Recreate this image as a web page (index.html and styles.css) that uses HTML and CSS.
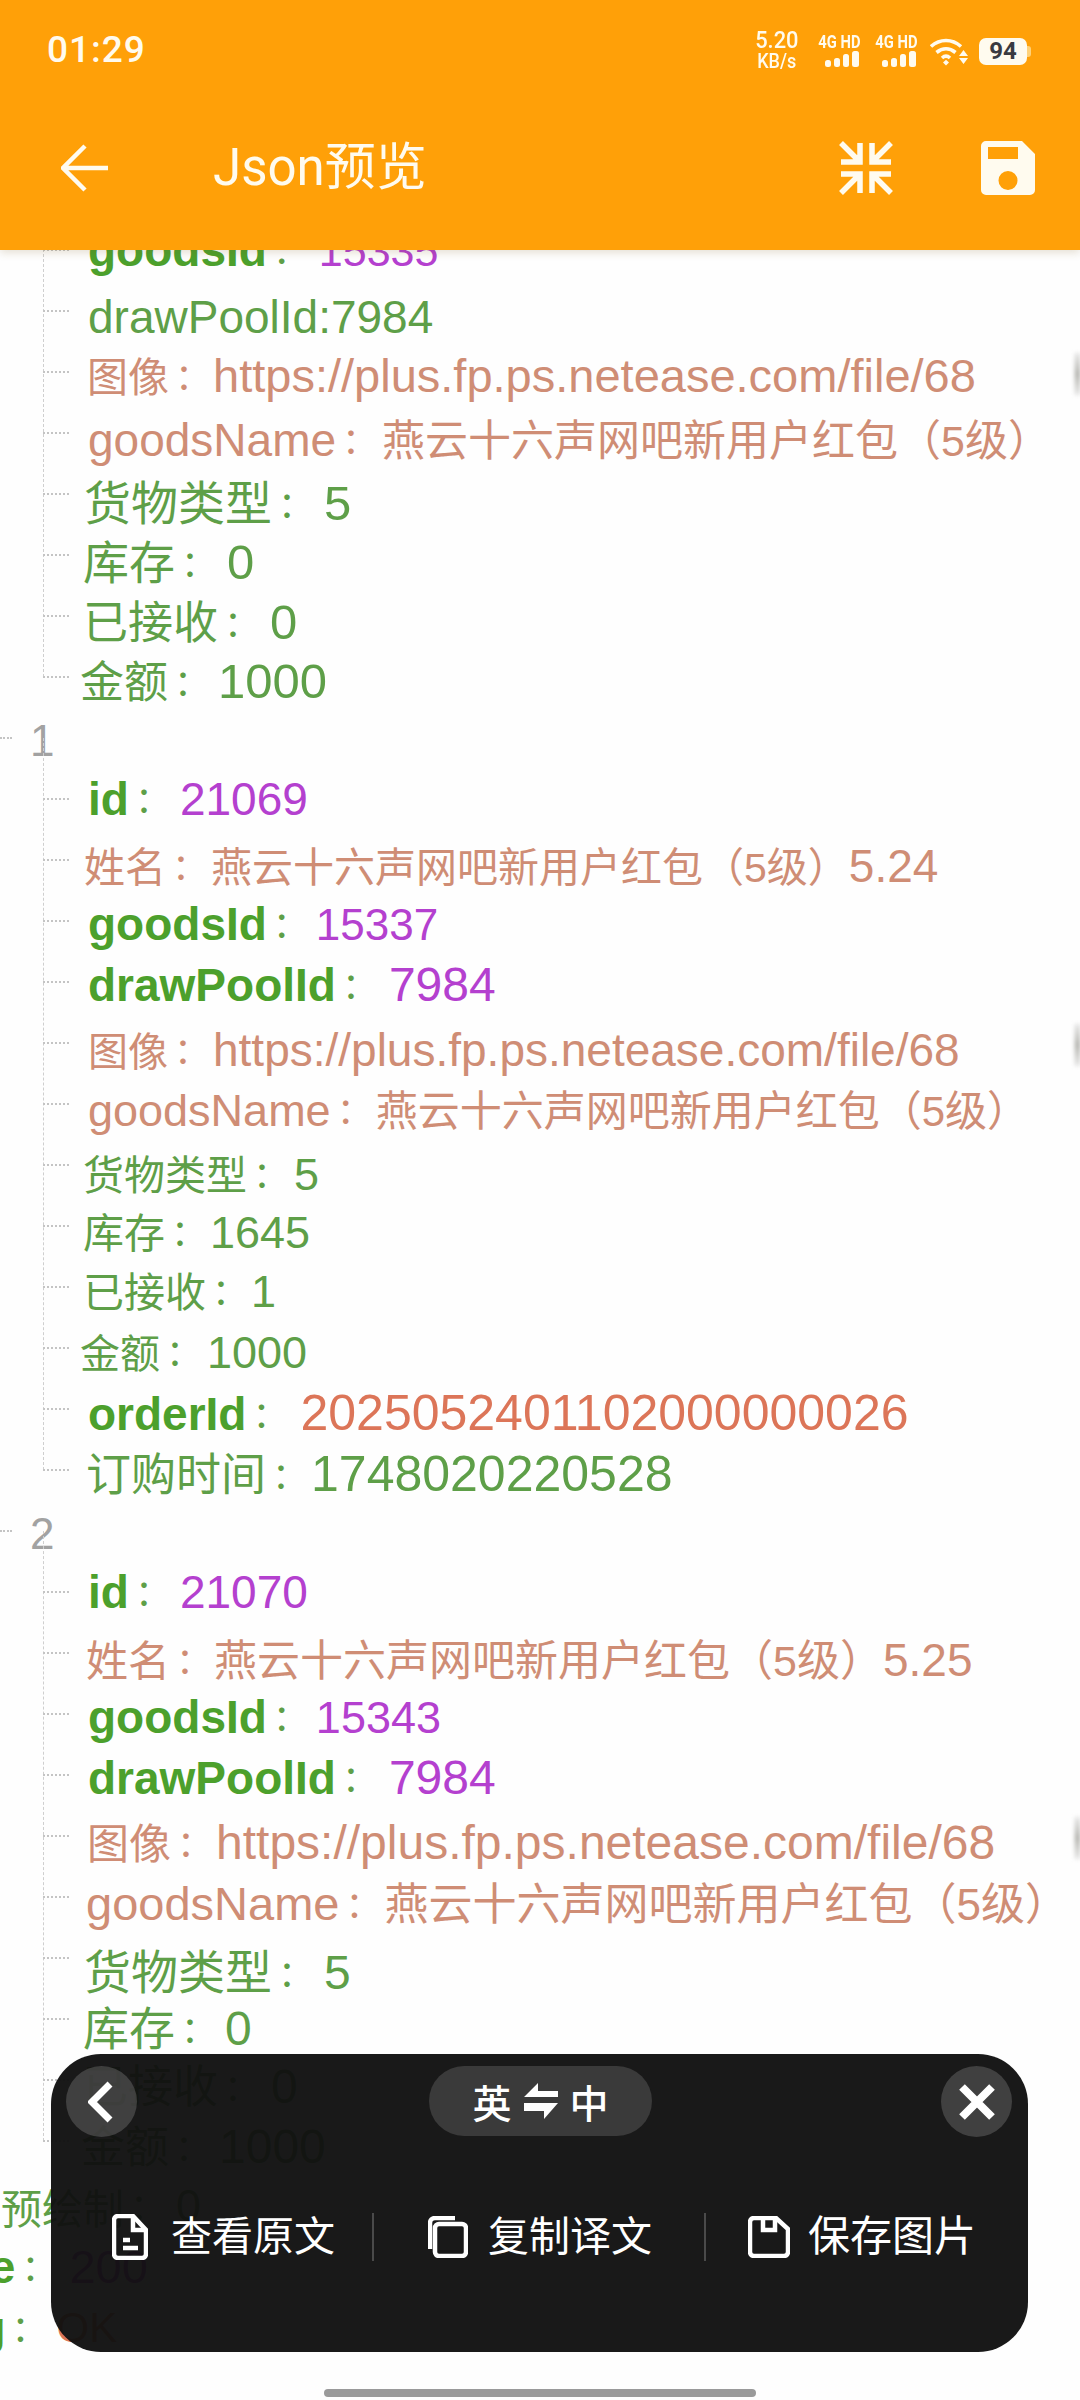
FILE: index.html
```html
<!DOCTYPE html>
<html lang="zh">
<head>
<meta charset="utf-8">
<title>Json预览</title>
<link rel="stylesheet" href="styles.css">
</head>
<body>
<div class="page">
  <header class="appbar">
    <div class="status">
      <span class="clock">01:29</span>
      <div class="status-right">
        <div class="speed"><span class="speed-n">5.20</span><span class="speed-u">KB/s</span></div>
        <div class="net"><span class="net-t">4G HD</span>
          <svg class="bars" viewBox="0 0 36 16"><rect x="1" y="9" width="6" height="7" rx="2.5"/><rect x="10" y="7" width="6" height="9" rx="2.5"/><rect x="19" y="3" width="6" height="13" rx="2.5"/><rect x="28" y="0" width="7" height="16" rx="2.5"/></svg></div>
        <div class="net n2"><span class="net-t">4G HD</span>
          <svg class="bars" viewBox="0 0 36 16"><rect x="1" y="9" width="6" height="7" rx="2.5"/><rect x="10" y="7" width="6" height="9" rx="2.5"/><rect x="19" y="3" width="6" height="13" rx="2.5"/><rect x="28" y="0" width="7" height="16" rx="2.5"/></svg></div>
        <svg class="wifi" viewBox="0 0 38 29"><path d="M1 9.500C10 1.500 22 1.500 31 9.500" /><path d="M6.500 15.500C12.500 10.500 19.500 10.500 25.500 15.500"/><path d="M12 21C14.500 18.800 17.500 18.800 20 21"/><path class="wifi-f" d="M13 25.500L16 22.800L19 25.500L16 28.500Z"/><path class="wifi-f" d="M33.500 13L38 19H29ZM29 21H38L33.500 27Z"/></svg>
        <div class="battery"><span class="battery-n">94</span></div>
      </div>
    </div>
    <div class="toolbar">
      <svg class="tb-back" viewBox="0 0 48 48"><path d="M47 24H3M24 2L2 24L24 46"/></svg>
      <span class="tb-title">Json预览</span>
      <svg class="tb-shrink" viewBox="0 0 56 56"><path d="M3 3L20 20M3 22H22V3M53 3L36 20M53 22H34V3M3 53L20 36M3 34H22V53M53 53L36 36M53 34H34V53"/></svg>
      <svg class="tb-save" viewBox="0 0 54 54"><path fill-rule="evenodd" d="M5 0H41L54 13V49A5 5 0 0 1 49 54H5A5 5 0 0 1 0 49V5A5 5 0 0 1 5 0ZM7 6V18H37V6ZM27 30A9.500 9.500 0 1 0 27 49A9.500 9.500 0 1 0 27 30Z"/></svg>
    </div>
  </header>

  <main class="tree">
    <section class="group">
      <div class="row"><i class="tick"></i><p class="txt m19 y2"><b class="kb t46">goodsId</b><span class="c w52">：</span><span class="v pu t43">15335</span></p></div>
      <div class="row"><i class="tick"></i><p class="txt m19 y2 g t46">drawPoolId:7984</p></div>
      <div class="row edge"><i class="tick"></i><p class="txt m18 s y6"><span class="t41">图像</span><span class="c w44">：</span><span class="t47">https://plus.fp.ps.netease.com/file/68</span></p></div>
      <div class="row"><i class="tick"></i><p class="txt m19 s y9"><span class="t46">goodsName</span><span class="c w46">：</span><span class="t43">燕云十六声网吧新用户红包（5级）</span></p></div>
      <div class="row"><i class="tick"></i><p class="txt m15 g y11"><span class="t47">货物类型</span><span class="c w52">：</span><span class="t49">5</span></p></div>
      <div class="row"><i class="tick"></i><p class="txt m14 g y9"><span class="t46">库存</span><span class="c w52">：</span><span class="t49">0</span></p></div>
      <div class="row"><i class="tick"></i><p class="txt m14 g y8"><span class="t45">已接收</span><span class="c w52">：</span><span class="t49">0</span></p></div>
      <div class="row"><i class="tick"></i><p class="txt m11 g y6"><span class="t44">金额</span><span class="c w50">：</span><span class="t49">1000</span></p></div>
    </section>

    <div class="index"><i class="tick-root"></i><span class="idx">1</span></div>

    <section class="group">
      <div class="row"><i class="tick"></i><p class="txt m19 y2"><b class="kb t46">id</b><span class="c w51">：</span><span class="pu t46">21069</span></p></div>
      <div class="row"><i class="tick"></i><p class="txt m15 s y8"><span class="t41">姓名</span><span class="c w45">：</span><span class="t41">燕云十六声网吧新用户红包（5级）</span><span class="t46">5.24</span></p></div>
      <div class="row"><i class="tick"></i><p class="txt m19 y5"><b class="kb t46">goodsId</b><span class="c w49">：</span><span class="pu t44">15337</span></p></div>
      <div class="row"><i class="tick"></i><p class="txt m19 y5"><b class="kb t46">drawPoolId</b><span class="c w53">：</span><span class="pu t48">7984</span></p></div>
      <div class="row edge"><i class="tick"></i><p class="txt m19 s y9"><span class="t40">图像</span><span class="c w45">：</span><span class="t46">https://plus.fp.ps.netease.com/file/68</span></p></div>
      <div class="row"><i class="tick"></i><p class="txt m19 s y8"><span class="t45">goodsName</span><span class="c w45">：</span><span class="t42">燕云十六声网吧新用户红包（5级）</span></p></div>
      <div class="row"><i class="tick"></i><p class="txt m14 g y11"><span class="t41">货物类型</span><span class="c w47">：</span><span class="t45">5</span></p></div>
      <div class="row"><i class="tick"></i><p class="txt m14 g y8"><span class="t41">库存</span><span class="c w45">：</span><span class="t45">1645</span></p></div>
      <div class="row"><i class="tick"></i><p class="txt m14 g y6"><span class="t41">已接收</span><span class="c w45">：</span><span class="t45">1</span></p></div>
      <div class="row"><i class="tick"></i><p class="txt m11 g y6"><span class="t40">金额</span><span class="c w47">：</span><span class="t45">1000</span></p></div>
      <div class="row"><i class="tick"></i><p class="txt m19 y6"><b class="kb t46">orderId</b><span class="c w54">：</span><span class="or t50">2025052401102000000026</span></p></div>
      <div class="row"><i class="tick"></i><p class="txt m17 g y6"><span class="t45">订购时间</span><span class="c w45">：</span><span class="t50">1748020220528</span></p></div>
    </section>

    <div class="index"><i class="tick-root"></i><span class="idx">2</span></div>

    <section class="group">
      <div class="row"><i class="tick"></i><p class="txt m19 y2"><b class="kb t46">id</b><span class="c w51">：</span><span class="pu t46">21070</span></p></div>
      <div class="row"><i class="tick"></i><p class="txt m17 s y9"><span class="t42">姓名</span><span class="c w44">：</span><span class="t43">燕云十六声网吧新用户红包（5级）</span><span class="t46">5.25</span></p></div>
      <div class="row"><i class="tick"></i><p class="txt m19 y5"><b class="kb t46">goodsId</b><span class="c w49">：</span><span class="pu t45">15343</span></p></div>
      <div class="row"><i class="tick"></i><p class="txt m19 y5"><b class="kb t46">drawPoolId</b><span class="c w53">：</span><span class="pu t48">7984</span></p></div>
      <div class="row edge"><i class="tick"></i><p class="txt m18 s y9"><span class="t42">图像</span><span class="c w45">：</span><span class="t48">https://plus.fp.ps.netease.com/file/68</span></p></div>
      <div class="row"><i class="tick"></i><p class="txt m17 s y9"><span class="t47">goodsName</span><span class="c w45">：</span><span class="t44">燕云十六声网吧新用户红包（5级）</span></p></div>
      <div class="row"><i class="tick"></i><p class="txt m15 g y17"><span class="t47">货物类型</span><span class="c w52">：</span><span class="t48">5</span></p></div>
      <div class="row"><i class="tick"></i><p class="txt m14 g y12"><span class="t46">库存</span><span class="c w50">：</span><span class="t48">0</span></p></div>
      <div class="row"><i class="tick"></i><p class="txt m14 g y9"><span class="t45">已接收</span><span class="c w53">：</span><span class="t48">0</span></p></div>
      <div class="row"><i class="tick"></i><p class="txt m12 g y8"><span class="t44">金额</span><span class="c w50">：</span><span class="t48">1000</span></p></div>
    </section>

    <div class="root-row predraw g"><span class="t41">预绘制</span><span class="c w52">：</span><span class="t45">0</span></div>
    <div class="root-row code"><b class="kb t46">code</b><span class="c w54">：</span><span class="pu t47">200</span></div>
    <div class="root-row msg"><b class="kb t46">msg</b><span class="c w51">：</span><span class="or t42">OK</span></div>
  </main>

  <aside class="panel">
    <div class="panel-top">
      <button class="round"><svg class="ico-chev" viewBox="0 0 26 42"><path d="M22 3L4 21L22 39"/></svg></button>
      <div class="pill"><span>英</span><svg class="ico-swap" viewBox="0 0 38 36"><path d="M16 0L16 8H36V14H2ZM2 20H36L22 36V28H2Z"/></svg><span>中</span></div>
      <button class="round"><svg class="ico-x" viewBox="0 0 38 36"><path d="M4 3L34 33M34 3L4 33"/></svg></button>
    </div>
    <div class="actions">
      <div class="act a1"><svg class="ico ico-doc" viewBox="0 0 36 46"><path class="ln" d="M6 2H21L34 16V40A4 4 0 0 1 30 44H6A4 4 0 0 1 2 40V6A4 4 0 0 1 6 2Z"/><path class="ln" d="M11 26H18M11 34H26M21 2V16H34"/></svg><span>查看原文</span></div>
      <i class="sep s1"></i>
      <div class="act a2"><svg class="ico ico-copy" viewBox="0 0 40 42"><rect class="ln" x="7" y="8" width="31" height="32" rx="4"/><path class="ln" d="M27 2H7A5 5 0 0 0 2 7V33"/></svg><span>复制译文</span></div>
      <i class="sep s2"></i>
      <div class="act a3"><svg class="ico ico-disk" viewBox="0 0 42 42"><path class="ln" d="M6 2H28L40 13V36A4 4 0 0 1 36 40H6A4 4 0 0 1 2 36V6A4 4 0 0 1 6 2Z"/><path class="ln" d="M15 2V14H27V2"/></svg><span>保存图片</span></div>
    </div>
  </aside>
  <div class="homebar"></div>
</div>
</body>
</html>
```

FILE: styles.css
```css
* { box-sizing: border-box; }
html, body { margin: 0; padding: 0; background: #fff; }
.page {
  position: relative;
  width: 1080px;
  height: 2400px;
  overflow: hidden;
  background: #fefefe;
  font-family: "Liberation Sans", "Noto Sans CJK SC", sans-serif;
}

/* app bar */
.appbar {
  position: relative;
  z-index: 2;
  height: 250px;
  background: #ffa008;
  box-shadow: 0 3px 8px rgba(120, 90, 30, .18);
  color: #fffbef;
}
.status {
  display: flex;
  justify-content: space-between;
  align-items: flex-start;
  height: 100px;
  padding: 0 53px 0 47px;
}
.clock {
  margin-top: 29px;
  font-family: Roboto, sans-serif;
  font-weight: 500;
  font-size: 37px;
  line-height: 42px;
  letter-spacing: 1px;
}
.status-right { display: flex; align-items: flex-start; margin-top: 30px; }
.speed { display: flex; flex-direction: column; align-items: center; width: 46px; margin-right: 13px; font-family: Roboto, sans-serif; font-weight: 500; }
.speed-n { font-size: 23px; line-height: 22px; transform: scaleX(.95); }
.speed-u { font-size: 20px; line-height: 18px; margin-top: 0; transform: scaleX(.9); }
.net { display: flex; flex-direction: column; align-items: flex-end; width: 47px; margin-right: 10px; font-family: Roboto, sans-serif; font-weight: 700; }
.n2 { margin-right: 13px; }
.net-t { font-size: 18px; line-height: 18px; white-space: nowrap; transform: scaleX(.82); transform-origin: right center; margin-top: 3px; }
.bars { width: 36px; height: 16px; margin-top: 0; fill: #fffbef; }
.wifi { width: 38px; height: 29px; margin: 7px 11px 0 0; }
.wifi path { fill: none; stroke: #fffbef; stroke-width: 3.6; }
.wifi .wifi-f { fill: #fffbef; stroke: none; }
.battery {
  position: relative;
  width: 48px;
  height: 27px;
  margin-top: 8px;
  background: #fffbef;
  border-radius: 7px;
  text-align: center;
}
.battery::after {
  content: "";
  position: absolute;
  right: -4px;
  top: 8px;
  width: 4px;
  height: 11px;
  background: #ffd27a;
  border-radius: 0 3px 3px 0;
}
.battery-n { color: #3a3a40; font-family: Roboto, sans-serif; font-weight: 700; font-size: 24px; line-height: 27px; }

.toolbar { display: flex; align-items: center; height: 70px; margin-top: 33px; }
.tb-back { width: 48px; height: 48px; margin-left: 61px; }
.tb-back path { fill: none; stroke: #fffbef; stroke-width: 4.5; }
.tb-title { margin-left: 104px; font-family: Roboto, "Noto Sans CJK SC", sans-serif; font-size: 51px; line-height: 60px; }
.tb-shrink { width: 56px; height: 56px; margin-left: auto; }
.tb-shrink path { fill: none; stroke: #fffbef; stroke-width: 5.500; }
.tb-save { width: 54px; height: 54px; margin: 0 45px 0 87px; fill: #fffbef; }

/* tree */
.tree { margin-top: -31px; margin-left: 0; }
.group { position: relative; margin-left: 43px; }
.group::before {
  content: "";
  position: absolute;
  left: 0;
  top: -30px;
  bottom: 30px;
  border-left: 1px dashed #cfcfcf;
}
.row { position: relative; display: flex; align-items: center; height: 61px; }
.tick { flex: none; width: 26px; border-top: 2px dotted #c4c4c4; }
.txt { margin: 0; padding-top: 8px; white-space: nowrap; line-height: 50px; }
.y2 { padding-top: 12px; } .y5 { padding-top: 18px; } .y6 { padding-top: 20px; }
.y8 { padding-top: 24px; } .y9 { padding-top: 26px; } .y11 { padding-top: 30px; }
.y12 { padding-top: 32px; } .y17 { padding-top: 42px; }
.edge::after {
  content: "";
  position: absolute;
  right: 0;
  top: 12px;
  width: 5px;
  height: 42px;
  background: linear-gradient(#e4e4e4, #a8a8a2, #e4e4e4);
  filter: blur(2px);
}
.index { display: flex; align-items: center; height: 61px; }
.tick-root { flex: none; width: 12px; margin-right: 18px; border-top: 2px dotted #c4c4c4; }
.idx { color: #a2a2a2; font-size: 44px; line-height: 50px; padding-top: 6px; }
.root-row { display: flex; align-items: center; height: 61px; padding-top: 8px; white-space: nowrap; }
.predraw { margin-left: 1px; }
.code { margin-left: -92px; }
.msg { margin-left: -89px; }

.g { color: #5e9f48; }
.s { color: #cf8d75; }
.pu { color: #b440cf; }
.or { color: #dc7558; }
.kb { color: #4ca02c; font-weight: 700; }
.c { display: inline-block; text-align: left; text-indent: -3px; color: inherit; font-family: "Noto Sans CJK TC", sans-serif; font-size: 36px; }
.kb + .c { color: #5e9f48; }

.m11 { margin-left: 11px; } .m12 { margin-left: 12px; } .m14 { margin-left: 14px; }
.m15 { margin-left: 15px; } .m17 { margin-left: 17px; } .m18 { margin-left: 18px; }
.m19 { margin-left: 19px; }
.t40 { font-size: 40px; } .t41 { font-size: 41px; } .t42 { font-size: 42px; }
.t43 { font-size: 43px; } .t44 { font-size: 44px; } .t45 { font-size: 45px; }
.t46 { font-size: 46px; } .t47 { font-size: 47px; } .t48 { font-size: 48px; }
.t49 { font-size: 49px; } .t50 { font-size: 50px; }
.w44 { width: 44px; } .w45 { width: 45px; } .w46 { width: 46px; } .w47 { width: 47px; }
.w49 { width: 49px; } .w50 { width: 50px; } .w51 { width: 51px; } .w52 { width: 52px; }
.w53 { width: 53px; } .w54 { width: 54px; }

/* floating panel */
.panel {
  position: absolute;
  z-index: 3;
  left: 51px;
  top: 2054px;
  width: 977px;
  height: 298px;
  background: rgba(16, 16, 16, .96);
  border-radius: 50px;
  color: #fff;
}
.panel-top { display: flex; justify-content: space-between; padding: 12px 16px 0 15px; }
.round {
  display: flex;
  align-items: center;
  justify-content: center;
  width: 71px;
  height: 71px;
  padding: 0;
  border: 0;
  border-radius: 50%;
  background: rgba(120, 120, 120, .42);
}
.ico-chev { width: 26px; height: 42px; margin-right: 2px; }
.ico-chev path { fill: none; stroke: #fff; stroke-width: 7; }
.ico-x { width: 38px; height: 36px; }
.ico-x path { fill: none; stroke: #fff; stroke-width: 8; }
.pill {
  display: flex;
  align-items: center;
  justify-content: center;
  gap: 10px;
  width: 223px;
  height: 70px;
  margin-left: 3px;
  border-radius: 35px;
  background: #3a3a3a;
  font-size: 39px;
  font-weight: 500;
}
.ico-swap { width: 38px; height: 36px; fill: #fff; }
.actions { display: flex; align-items: center; height: 66px; margin-top: 67px; }
.act { display: flex; align-items: center; font-size: 41px; line-height: 60px; white-space: nowrap; color: #fff; }
.ico { flex: none; }
.ln { fill: none; stroke: #fff; stroke-width: 4.500; }
.ico-doc { width: 36px; height: 46px; margin-right: 23px; }
.ico-copy { width: 40px; height: 42px; margin-right: 20px; }
.ico-disk { width: 42px; height: 42px; margin-right: 18px; }
.a1 { margin-left: 61px; }
.sep { flex: none; width: 2px; height: 48px; background: #4a4a4a; }
.s1 { margin-left: 37px; }
.a2 { margin-left: 54px; }
.s2 { margin-left: 52px; }
.a3 { margin-left: 42px; font-size: 42px; }

.homebar {
  position: absolute;
  left: 324px;
  top: 2389px;
  width: 432px;
  height: 8px;
  border-radius: 4px;
  background: #9a9a9a;
}
```
